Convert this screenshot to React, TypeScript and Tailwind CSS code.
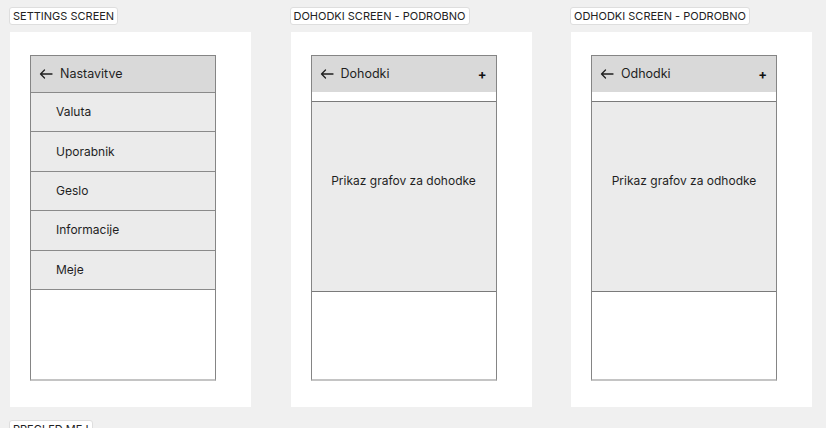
const font = { fontFamily: "Inter, 'Noto Sans', sans-serif" };

function BackArrow() {
  return (
    <svg width="14" height="10" viewBox="0 0 14 10" fill="none" className="shrink-0">
      <path d="M13 5H1.5M5.5 1L1.5 5L5.5 9" stroke="#1f1f1f" strokeWidth="1.3" strokeLinecap="round" strokeLinejoin="round" />
    </svg>
  );
}

function Label({ text }: { text: string }) {
  return (
    <div className="-ml-px h-[18px] self-start rounded-[3px] border border-[#dedede] bg-white px-[3px] text-[11px] leading-[16px] text-[#222]">
      {text}
    </div>
  );
}

function Header({ title, plus }: { title: string; plus?: boolean }) {
  return (
    <div className="flex h-[36px] items-center bg-[#d9d9d9] pl-[8px] pr-[9px]">
      <BackArrow />
      <span className="ml-[7px] text-[12.5px] text-[#1f1f1f]">{title}</span>
      {plus && <span className="ml-auto text-[13px] font-bold leading-none text-[#111]">+</span>}
    </div>
  );
}

function Phone({ children }: { children: React.ReactNode }) {
  return (
    <div className="ml-[20px] mt-[23px] flex h-[326px] w-[186px] flex-col overflow-hidden border border-b-2 border-[#858585] border-b-[#c4c4c4] bg-white">
      {children}
    </div>
  );
}

function SettingsScreen() {
  const rows = ["Valuta", "Uporabnik", "Geslo", "Informacije", "Meje"];
  return (
    <Phone>
      <Header title="Nastavitve" />
      {rows.map((r) => (
        <div
          key={r}
          className="flex h-[39.4px] items-center border-t border-[#8a8a8a] bg-[#ebebeb] pl-[25px] text-[12px] text-[#1f1f1f]"
        >
          {r}
        </div>
      ))}
      <div className="flex-1 border-t border-[#8a8a8a] bg-white" />
    </Phone>
  );
}

function DetailScreen({ title, text }: { title: string; text: string }) {
  return (
    <Phone>
      <Header title={title} plus />
      <div className="h-[9px] bg-white" />
      <div className="h-[191px] border-y border-[#7a7a7a] bg-[#ebebeb] pt-[71px] text-center text-[12px] leading-[16px] text-[#1f1f1f]">
        {text}
      </div>
      <div className="flex-1 bg-white" />
    </Phone>
  );
}

function Column({ label, children }: { label: string; children: React.ReactNode }) {
  return (
    <div className="flex w-[241px] flex-col gap-[7px]">
      <Label text={label} />
      <div className="h-[375px] w-[241px] bg-white">{children}</div>
    </div>
  );
}

export default function App() {
  return (
    <div className="h-[428px] w-[826px] overflow-hidden bg-[#f0f0f0] pl-[10px] pt-[7px]" style={font}>
      <div className="flex gap-[39.5px]">
        <Column label="SETTINGS SCREEN">
          <SettingsScreen />
        </Column>
        <Column label="DOHODKI SCREEN - PODROBNO">
          <DetailScreen title="Dohodki" text="Prikaz grafov za dohodke" />
        </Column>
        <Column label="ODHODKI SCREEN - PODROBNO">
          <DetailScreen title="Odhodki" text="Prikaz grafov za odhodke" />
        </Column>
      </div>
      <div className="mt-[13px] flex">
        <Label text="PREGLED MEJ" />
      </div>
    </div>
  );
}
